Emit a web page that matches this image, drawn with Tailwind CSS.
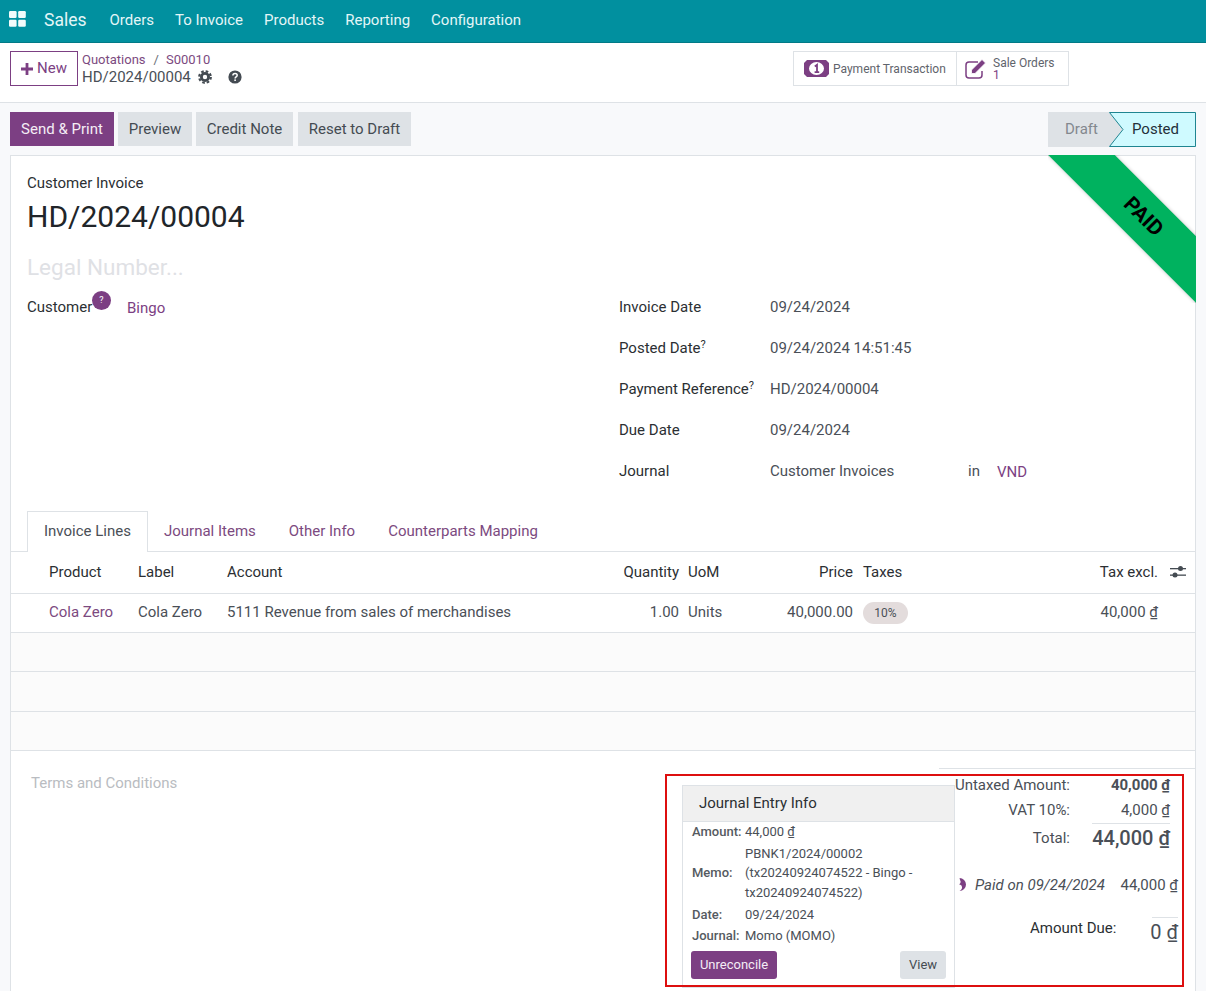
<!DOCTYPE html>
<html lang="en">
  <head>
    <meta charset="UTF-8" />
    <title>HD/2024/00004</title>
    <script src="https://cdn.jsdelivr.net/npm/@tailwindcss/browser@4"></script>
  </head>
  <body class="font-['Roboto',sans-serif] text-[15px] text-[#4a4f57] bg-white">
    <div class="relative h-[991px] overflow-hidden flex flex-col">
      <!-- Navbar -->
      <nav class="h-[43px] shrink-0 flex items-center pb-[2px] bg-[#01909f] border-b border-[#017a86] text-[#e4f6f7]">
        <svg class="ml-[9px] w-[17px] h-[17px] -mt-[2px]" viewBox="0 0 17 17" fill="#f2fbfb">
          <rect x="0" y="0" width="7.6" height="7" rx="1.2" />
          <rect x="9.2" y="0" width="7.6" height="7" rx="1.2" />
          <rect x="0" y="8.8" width="7.6" height="7" rx="1.2" />
          <rect x="9.2" y="8.8" width="7.6" height="7" rx="1.2" />
        </svg>
        <span class="ml-[18px] text-[17.5px]">Sales</span>
        <span class="ml-[23px]">Orders</span>
        <span class="ml-[21px]">To Invoice</span>
        <span class="ml-[21px]">Products</span>
        <span class="ml-[21px]">Reporting</span>
        <span class="ml-[21px]">Configuration</span>
      </nav>

      <!-- Control panel -->
      <div class="h-[60px] shrink-0 flex items-start pt-[8px] pl-[10px] border-b border-[#dee2e6] bg-white">
        <button class="h-[35px] w-[68px] flex items-center justify-center gap-[4px] border border-[#7c3f83] text-[#7c3f83] text-[15px]">
          <svg class="w-[12px] h-[12px]" viewBox="0 0 12 12" fill="#7c3f83"><path d="M4.6 0h2.8v4.6H12v2.8H7.4V12H4.6V7.4H0V4.6h4.6z" /></svg>
          New
        </button>
        <div class="ml-[4px] flex flex-col">
          <div class="flex text-[13px] leading-[17px] text-[#7c4a80]">
            <span>Quotations</span>
            <span class="ml-[8px] mr-[7px] text-[#6b7077]">/</span>
            <span>S00010</span>
          </div>
          <div class="flex items-center text-[#4a4f57] text-[15px] leading-[18px]">
            HD/2024/00004
            <svg class="ml-[7px] w-[14px] h-[14px]" viewBox="0 0 14 14" fill="none" stroke="#444b52">
              <circle cx="7" cy="7" r="3.6" stroke-width="2.8" />
              <circle cx="7" cy="7" r="5.8" stroke-width="2.2" stroke-dasharray="2.6 1.95" />
            </svg>
            <svg class="ml-[16px] w-[14px] h-[14px]" viewBox="0 0 14 14">
              <circle cx="7" cy="7" r="6.6" fill="#444b52" />
              <path d="M4.9 5.4c0-1.3 1-2 2.2-2 1.2 0 2.1.8 2.1 1.9 0 1.6-2.1 1.6-2.1 3.1" fill="none" stroke="#fff" stroke-width="1.5" />
              <rect x="6.3" y="9.4" width="1.6" height="1.6" fill="#fff" />
            </svg>
          </div>
        </div>
        <div class="ml-auto mr-[137px] h-[35px] flex border border-[#dee2e6] text-[12px] text-[#5f646c]">
          <div class="w-[163px] flex items-center pl-[10px] border-r border-[#dee2e6]">
            <svg class="w-[25px] h-[17px] mr-[4px] shrink-0" viewBox="0 0 25 17">
              <path d="M3 0h19l3 3v11l-3 3H3l-3-3V3z" fill="#7c3f83" />
              <ellipse cx="12.500" cy="8.500" rx="7.500" ry="6.500" fill="#fff" />
              <path d="M10.800 6.400l2.200-1.600v7.400M10.600 12.200h4.600" fill="none" stroke="#7c3f83" stroke-width="1.800" />
            </svg>
            Payment Transaction
          </div>
          <div class="w-[111px] flex items-center pl-[7px]">
            <svg class="w-[24px] h-[24px] mr-[5px] shrink-0" viewBox="0 0 24 24" fill="none">
              <path d="M18 14V18a3 3 0 0 1-3 3H5a3 3 0 0 1-3-3V8a3 3 0 0 1 3-3h9" stroke="#7c3f83" stroke-width="1.500" />
              <path d="M7.500 13l10.500-10.500 3.500 3.500L11 16.500H7.500z" fill="#7c3f83" stroke="#fff" stroke-width="0.800" />
            </svg>
            <div class="flex flex-col leading-[12px]">
              <span>Sale Orders</span>
              <span class="text-[#7c3f83]">1</span>
            </div>
          </div>
        </div>
      </div>

      <!-- Action bar + sheet -->
      <div class="flex-1 bg-[#f8f9fb] pl-[10px] pr-[10px] flex flex-col">
        <div class="h-[52px] shrink-0 pt-[9px] flex items-start gap-[4px]">
          <button class="h-[34px] w-[104px] pt-[1px] bg-[#7c3f83] text-[#f4edf5]">Send &amp; Print</button>
          <button class="h-[34px] w-[74px] pt-[1px] bg-[#dee2e6] text-[#444b52]">Preview</button>
          <button class="h-[34px] w-[97px] pt-[1px] bg-[#dee2e6] text-[#444b52]">Credit Note</button>
          <button class="h-[34px] w-[113px] pt-[1px] ml-[1px] bg-[#dee2e6] text-[#444b52]">Reset to Draft</button>
          <div class="ml-auto flex h-[35px]">
            <div class="w-[75px] pl-[17px] bg-[#dee2e6] text-[#83888e] flex items-center">Draft</div>
            <div class="relative w-[87px] -ml-[14px] flex items-center pl-[23px] text-[#24303a]">
              <svg class="absolute inset-0 w-[87px] h-[35px]" viewBox="0 0 87 35">
                <path d="M0.500 0.500H86.500V34.500H0.500L14 17.500z" fill="#cffaff" stroke="#1f8591" />
              </svg>
              <span class="relative">Posted</span>
            </div>
          </div>
        </div>

        <!-- Sheet -->
        <div class="relative flex-1 bg-white border border-[#dee2e6] border-b-0">
          <!-- Ribbon -->
          <div class="absolute -top-px -right-px w-[148px] h-[148px] overflow-hidden">
            <div class="absolute left-[-19px] top-[34px] w-[220px] h-[47px] rotate-45 bg-[#00b25f] shadow-[0_0_4px_rgba(0,0,0,0.25)] flex items-center justify-center pl-[12px] text-black font-bold text-[21px]">PAID</div>
          </div>

          <div class="px-[16px] pt-[17px]">
            <div class="text-[#2b2f33] leading-[20px]">Customer Invoice</div>
            <div class="mt-[6px] text-[30px] leading-[36px] text-[#212529]">HD/2024/00004</div>
            <div class="mt-[16px] text-[22.5px] leading-[32px] text-[#dfe1e5]">Legal Number...</div>
            <div class="mt-[3px] grid grid-cols-[592px_1fr]">
              <div class="relative flex items-start pt-[11px]">
                <span class="text-[#2b2f33] leading-[20px]">Customer</span>
                <span class="absolute left-[65px] top-[5px] w-[19px] h-[19px] rounded-full bg-[#7c3f83] text-white text-[9px] flex items-center justify-center">?</span>
                <span class="absolute left-[100px] top-[12px] leading-[20px] text-[#7c3f83]">Bingo</span>
              </div>
              <div class="grid grid-cols-[151px_1fr] auto-rows-[41px] items-center pt-[1px]">
                <div class="text-[#2b2f33]">Invoice Date</div>
                <div>09/24/2024</div>
                <div class="text-[#2b2f33]">Posted Date<sup class="text-[11px]">?</sup></div>
                <div>09/24/2024 14:51:45</div>
                <div class="text-[#2b2f33]">Payment Reference<sup class="text-[11px]">?</sup></div>
                <div>HD/2024/00004</div>
                <div class="text-[#2b2f33]">Due Date</div>
                <div>09/24/2024</div>
                <div class="text-[#2b2f33]">Journal</div>
                <div class="flex">
                  <span class="w-[198px]">Customer Invoices</span>
                  <span class="w-[29px]">in</span>
                  <span class="mt-[1px] text-[#7c3f83]">VND</span>
                </div>
              </div>
            </div>
          </div>

          <!-- Tabs -->
          <div class="mt-[19px] h-[41px] flex pl-[16px] border-b border-[#dee2e6] text-[#7c4a80]">
            <div class="h-[41px] px-[16px] pb-[2px] flex items-center border border-b-0 border-[#dee2e6] bg-white text-[#4a4f57]">Invoice Lines</div>
            <div class="px-[16px] flex items-center">Journal Items</div>
            <div class="px-[17px] flex items-center">Other Info</div>
            <div class="px-[16px] flex items-center">Counterparts Mapping</div>
          </div>

          <!-- Lines -->
          <table class="w-full table-fixed border-collapse">
            <colgroup>
              <col class="w-[127px]" />
              <col class="w-[89px]" />
              <col class="w-[393px]" />
              <col class="w-[68px]" />
              <col class="w-[82px]" />
              <col class="w-[93px]" />
              <col />
              <col class="w-[37px]" />
            </colgroup>
            <tr class="h-[41px] text-[#2b2f33] border-b border-[#dee2e6]">
              <td class="pl-[38px]">Product</td>
              <td>Label</td>
              <td>Account</td>
              <td class="text-right pr-[9px]">Quantity</td>
              <td>UoM</td>
              <td class="text-right pr-[10px]">Price</td>
              <td><div class="flex justify-between"><span>Taxes</span><span>Tax excl.</span></div></td>
              <td>
                <svg class="ml-[12px] w-[16px] h-[14px]" viewBox="0 0 16 14" fill="#444b52">
                  <rect x="0" y="3" width="16" height="1.300" />
                  <rect x="0" y="9.500" width="16" height="1.300" />
                  <circle cx="10.500" cy="3.600" r="2.500" />
                  <circle cx="5" cy="10.100" r="2.500" />
                </svg>
              </td>
            </tr>
            <tr class="h-[39px] border-b border-[#dee2e6]">
              <td class="pl-[38px] text-[#7c4a80]">Cola Zero</td>
              <td>Cola Zero</td>
              <td class="whitespace-nowrap">5111 Revenue from sales of merchandises</td>
              <td class="text-right pr-[9px]">1.00</td>
              <td>Units</td>
              <td class="text-right pr-[10px]">40,000.00</td>
              <td>
                <div class="flex justify-between items-center">
                  <span class="h-[22px] w-[45px] rounded-full bg-[#e3dcdc] text-[12px] flex items-center justify-center">10%</span>
                  <span>40,000 ₫</span>
                </div>
              </td>
              <td></td>
            </tr>
            <tr class="h-[39px] bg-[#fbfbfb] border-b border-[#dee2e6]"><td colspan="8"></td></tr>
            <tr class="h-[40px] bg-[#fbfbfb] border-b border-[#dee2e6]"><td colspan="8"></td></tr>
            <tr class="h-[39px] bg-[#fbfbfb] border-b border-[#dee2e6]"><td colspan="8"></td></tr>
          </table>

          <!-- Terms + totals -->
          <div class="relative flex justify-between pl-[20px]">
            <div class="pt-[22px] text-[#b9bcc1] leading-[20px]">Terms and Conditions</div>
            <div class="mt-[17px] w-[256px] border-t border-[#dee2e6] relative">
              <div class="grid grid-cols-[131px_100px] pt-[4px] text-right">
                <div class="h-[25px] flex items-center justify-end">Untaxed Amount:</div>
                <div class="h-[25px] flex items-center justify-end font-bold">40,000 ₫</div>
                <div class="h-[25px] flex items-center justify-end">VAT 10%:</div>
                <div class="h-[25px] flex items-center justify-end">4,000 ₫</div>
                <div class="h-[31px] pt-[1px] flex items-center justify-end">Total:</div>
                <div class="h-[31px] ml-[22px] pb-[2px] flex items-center justify-end font-medium text-[20px] border-t border-[#dee2e6]">44,000 ₫</div>
              </div>
              <div class="mt-[20px] ml-[18px] flex items-center justify-between pr-[17px]">
                <svg class="absolute left-[18px] w-[13px] h-[15px]" viewBox="0 0 12 15">
                  <path d="M2 1a6.500 6.500 0 0 1 0 13c2-1 3.200-3 2.200-5-.5-1-1.500-1.500-2.700-1.500 1.700-1 2.200-2.800 1-4.500-.2-.9-.3-1.500-.5-2z" fill="#7c3f83" />
                </svg>
                <span class="ml-[18px] italic">Paid on 09/24/2024</span>
                <span>44,000 ₫</span>
              </div>
              <div class="mt-[20px] flex items-start">
                <span class="ml-[91px] w-[86px] text-[#2b2f33] text-right leading-[20px] pt-[2px] whitespace-nowrap">Amount Due:</span>
                <span class="ml-[36px] w-[26px] mt-[1px] border-t border-[#dee2e6] text-[20px] leading-[28px] text-right whitespace-nowrap flex justify-end">0 ₫</span>
              </div>
            </div>

            <!-- Journal entry popover -->
            <div class="absolute left-[671px] top-[34px] w-[273px] bg-white border border-[#dee2e6] text-[13px] text-[#4a4f57]">
              <div class="h-[36px] pl-[16px] flex items-center bg-[#f0f0f0] border-b border-[#dee2e6] text-[15px] text-[#2b2f33]">Journal Entry Info</div>
              <div class="pl-[9px] grid grid-cols-[53px_1fr] items-center leading-[19.500px]">
                <div class="font-medium pb-[2.500px] text-[#555a61]">Amount:</div>
                <div class="pb-[2.500px]">44,000 ₫</div>
                <div class="font-medium text-[#555a61]">Memo:</div>
                <div>PBNK1/2024/00002<br />(tx20240924074522 - Bingo -<br />tx20240924074522)</div>
                <div class="font-medium pt-[2.500px] text-[#555a61]">Date:</div>
                <div class="pt-[2.500px]">09/24/2024</div>
                <div class="font-medium pt-[1.500px] text-[#555a61]">Journal:</div>
                <div class="pt-[1.500px]">Momo (MOMO)</div>
              </div>
              <div class="mt-[6px] mb-[8px] px-[8px] flex justify-between">
                <button class="h-[28px] w-[86px] rounded-[3px] bg-[#7c3f83] text-[#f4edf5]">Unreconcile</button>
                <button class="h-[28px] w-[46px] rounded-[3px] bg-[#dee2e6] text-[#444b52]">View</button>
              </div>
            </div>
          </div>
        </div>
      </div>

      <!-- Red highlight -->
      <div class="absolute left-[665px] top-[774px] w-[519px] h-[213px] border-2 border-[#dd0f0f] pointer-events-none"></div>
    </div>
  </body>
</html>
